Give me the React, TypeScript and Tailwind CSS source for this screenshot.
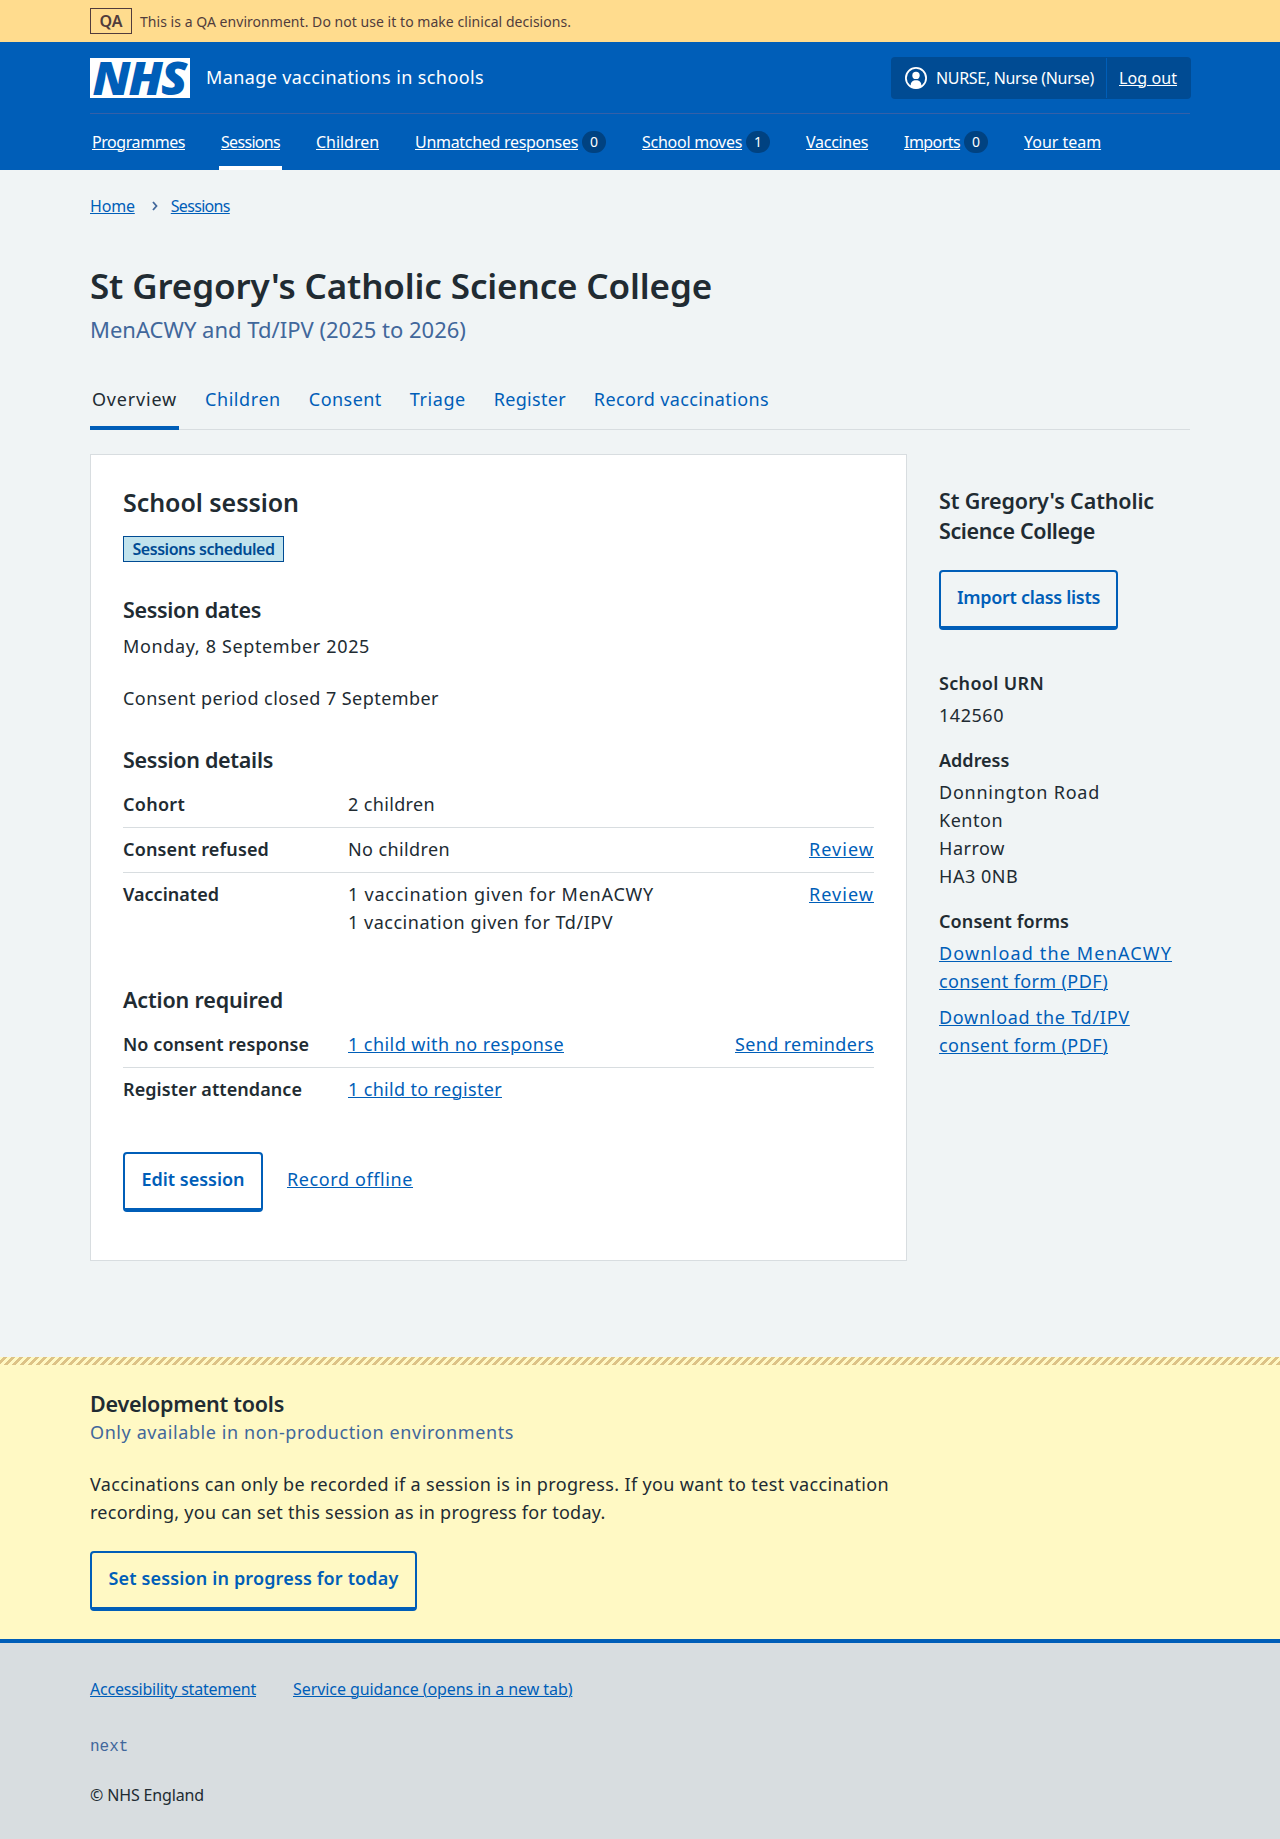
import type { ReactNode } from "react";

const link = "text-[#005eb8] underline decoration-1 underline-offset-[1px]";

type NavEntry = { label: string; tracking: string; count?: number; current?: boolean };

const NAV: NavEntry[] = [
  { label: "Programmes", tracking: "tracking-[-0.0273em]" },
  { label: "Sessions", tracking: "tracking-[-0.0429em]", current: true },
  { label: "Children", tracking: "tracking-[-0.0023em]" },
  { label: "Unmatched responses", tracking: "tracking-[-0.0185em]", count: 0 },
  { label: "School moves", tracking: "tracking-[-0.0163em]", count: 1 },
  { label: "Vaccines", tracking: "tracking-[-0.0181em]" },
  { label: "Imports", tracking: "tracking-[-0.0353em]", count: 0 },
  { label: "Your team", tracking: "tracking-[-0.0023em]" },
];

const TABS = [
  { label: "Overview", tracking: "tracking-[0.045em]", current: true },
  { label: "Children", tracking: "tracking-[0.032em]" },
  { label: "Consent", tracking: "tracking-[0.0255em]" },
  { label: "Triage", tracking: "tracking-[0.0324em]" },
  { label: "Register", tracking: "tracking-[0.0155em]" },
  { label: "Record vaccinations", tracking: "tracking-[0.0215em]" },
];

function NhsLogo() {
  return (
    <svg width="100" height="40" viewBox="0 0 100 40" role="img" aria-label="NHS" className="block overflow-visible">
      <rect width="100" height="40" fill="#fff" />
      <text
        x="2.5"
        y="36.700"
        textLength="93"
        lengthAdjust="spacingAndGlyphs"
        className="fill-[#005eb8] text-[46px] leading-none font-black italic tracking-[-0.04em]"
      >
        NHS
      </text>
    </svg>
  );
}

function UserIcon() {
  return (
    <svg width="22" height="22" viewBox="0 0 22 22" className="block shrink-0">
      <circle cx="11" cy="11" r="10.1" fill="none" stroke="#fff" strokeWidth="1.8" />
      <circle cx="11" cy="8.4" r="3.7" fill="#fff" />
      <path d="M5.7 20v-2c0-3 2.1-4.8 5.3-4.8s5.3 1.8 5.3 4.8v2Q14 21.600 11 21.600T5.700 20Z" fill="#fff" />
    </svg>
  );
}

function Container({ children, className = "" }: { children: ReactNode; className?: string }) {
  return <div className={`ml-[90px] w-[1100px] ${className}`}>{children}</div>;
}

function Button({ children, className }: { children: ReactNode; className: string }) {
  return (
    <button
      className={`flex h-[60px] items-start justify-center whitespace-nowrap rounded-[4px] border-2 border-b-4 border-[#005eb8] pt-[11px] text-[18px] leading-7 font-semibold text-[#005eb8] ${className}`}
    >
      {children}
    </button>
  );
}

function Row({ label, value, action, last }: { label: ReactNode; value: ReactNode; action?: ReactNode; last?: boolean }) {
  return (
    <div className={`flex pt-[7px] ${last ? "" : "border-b border-[#d8dde0] pb-[9px]"}`}>
      <dt className="w-[225px] shrink-0 font-semibold">{label}</dt>
      <dd className="flex-1">{value}</dd>
      {action && <dd>{action}</dd>}
    </div>
  );
}

function H3({ children, className = "" }: { children: ReactNode; className?: string }) {
  return <h3 className={`text-[21.5px] leading-[30px] font-semibold ${className}`}>{children}</h3>;
}

export default function App() {
  return (
    <div className="min-h-[1839px] bg-[#f0f4f5] font-['Noto_Sans',sans-serif] text-[18px] leading-7 whitespace-nowrap text-[#212b32]">
      <div className="h-[42px] bg-[#ffdc8e] text-[#513c3c]">
        <Container className="flex h-[42px] items-center gap-2">
          <strong className="flex h-[26px] w-[42px] items-center justify-center border border-[#513c3c] text-[16px] font-semibold">
            QA
          </strong>
          <span className="pt-px text-[14px] tracking-[0.0029em]">
            This is a QA environment. Do not use it to make clinical decisions.
          </span>
        </Container>
      </div>

      <header className="h-32 bg-[#005eb8] text-white">
        <Container>
          <div className="flex h-[72px] items-center justify-between border-b border-[#3560a8]">
            <div className="flex items-center gap-4">
              <NhsLogo />
              <span className="pb-[2px] tracking-[0.0217em]">Manage vaccinations in schools</span>
            </div>
            <div className="-mr-px flex h-[42px] rounded-[4px] bg-[#004b93] py-px text-[16px]">
              <div className="flex w-[216px] items-center gap-[9px] border-r border-[#005eb8] pl-[14px]">
                <UserIcon />
                <span className="tracking-[-0.02em]">NURSE, Nurse (Nurse)</span>
              </div>
              <div className="flex w-[84px] items-center pl-3">
                <a className="tracking-[0.0053em] underline decoration-1 underline-offset-[1px]">Log out</a>
              </div>
            </div>
          </div>
          <nav className="flex gap-8 text-[16px]">
            {NAV.map((n) => (
              <div
                key={n.label}
                className={`flex h-14 items-center gap-1 border-b-4 px-[2px] pt-1 ${n.current ? "border-white" : "border-transparent"}`}
              >
                <a className={`underline decoration-1 underline-offset-[1px] ${n.tracking}`}>{n.label}</a>
                {n.count !== undefined && (
                  <span className="flex h-[22px] w-6 items-center justify-center rounded-full bg-[#004281] text-[14px]">
                    {n.count}
                  </span>
                )}
              </div>
            ))}
          </nav>
        </Container>
      </header>

      <Container className="h-[1187px] pt-6">
        <nav className="flex items-center text-[16px] leading-6">
          <a className={`tracking-[-0.012em] ${link}`}>Home</a>
          <svg width="8" height="10" viewBox="0 0 8 10" className="mr-[12px] ml-[16px]" fill="none" stroke="#41679b" strokeWidth="1.8">
            <path d="M2 1l3.500 4L2 9" />
          </svg>
          <a className={`tracking-[-0.0429em] ${link}`}>Sessions</a>
        </nav>

        <h1 className="mt-[46px] text-[35px] leading-[44px] font-semibold tracking-[-0.0038em]">
          St Gregory&apos;s Catholic Science College
        </h1>
        <p className="mt-[5px] text-[22px] leading-8 text-[#41679b]">
          MenACWY and Td/IPV (2025 to 2026)
        </p>

        <nav className="mt-10 flex h-[45px] gap-6 border-b border-[#d8dde0]">
          {TABS.map((t) => (
            <a
              key={t.label}
              className={`h-[45px] px-[2px] ${t.tracking} ${t.current ? "border-b-4 border-[#005eb8]" : "text-[#005eb8]"}`}
            >
              {t.label}
            </a>
          ))}
        </nav>

        <div className="mt-6 flex gap-8">
          <section className="h-[807px] w-[817px] border border-[#d8dde0] bg-white px-8 pt-[31px]">
            <h2 className="text-[25px] leading-8 font-semibold tracking-[-0.0021em]">School session</h2>
            <strong className="mt-[18px] flex h-[26px] w-[161px] items-center justify-center border border-[#004b93] bg-[#c1e3ed] text-[16px] font-semibold tracking-[-0.0285em] text-[#004b93]">
              Sessions scheduled
            </strong>

            <H3 className="mt-[33px] tracking-[-0.015em]">Session dates</H3>
            <p className="mt-[7px] tracking-[0.0358em]">Monday, 8 September 2025</p>
            <p className="mt-6 tracking-[0.0247em]">Consent period closed 7 September</p>

            <H3 className="mt-[33px] tracking-[-0.0136em]">Session details</H3>
            <dl className="mt-2">
              <Row
                label={<span className="tracking-[0.0157em]">Cohort</span>}
                value={<span className="tracking-[0.0197em]">2 children</span>}
              />
              <Row
                label={<span className="tracking-[0.0083em]">Consent refused</span>}
                value={<span className="tracking-[0.0216em]">No children</span>}
                action={<a className={`tracking-[0.0582em] ${link}`}>Review</a>}
              />
              <Row
                last
                label={<span className="tracking-[0.001em]">Vaccinated</span>}
                value={
                  <>
                    <div className="tracking-[0.0426em]">1 vaccination given for MenACWY</div>
                    <div className="tracking-[0.0287em]">1 vaccination given for Td/IPV</div>
                  </>
                }
                action={<a className={`tracking-[0.0582em] ${link}`}>Review</a>}
              />
            </dl>

            <H3 className="mt-[49px] tracking-[-0.0072em]">Action required</H3>
            <dl className="mt-2">
              <Row
                label={<span className="tracking-[0.0039em]">No consent response</span>}
                value={<a className={`tracking-[0.0248em] ${link}`}>1 child with no response</a>}
                action={<a className={`tracking-[0.0198em] ${link}`}>Send reminders</a>}
              />
              <Row
                last
                label={<span className="tracking-[0.0039em]">Register attendance</span>}
                value={<a className={`tracking-[0.019em] ${link}`}>1 child to register</a>}
              />
            </dl>

            <div className="mt-[49px] flex gap-6">
              <Button className="w-[140px]">Edit session</Button>
              <a className={`mt-[13px] h-7 tracking-[0.0336em] ${link}`}>Record offline</a>
            </div>
          </section>

          <aside className="pt-8">
            <h2 className="text-[21.5px] leading-[30px] font-semibold">
              <span className="block tracking-[-0.0062em]">St Gregory&apos;s Catholic</span>
              <span className="block tracking-[-0.0177em]">Science College</span>
            </h2>
            <Button className="mt-6 w-[179px] tracking-[-0.0168em]">Import class lists</Button>
            <dl className="mt-[39px]">
              <dt className="font-semibold tracking-[0.0183em]">School URN</dt>
              <dd className="mt-1 tracking-[0.0299em]">142560</dd>
              <dt className="mt-[17px] font-semibold">Address</dt>
              <dd className="mt-1">
                <span className="block tracking-[0.0424em]">Donnington Road</span>
                <span className="block tracking-[0.03em]">Kenton</span>
                <span className="block tracking-[0.03em]">Harrow</span>
                <span className="block tracking-[0.03em]">HA3 0NB</span>
              </dd>
              <dt className="mt-[17px] font-semibold tracking-[0.0056em]">Consent forms</dt>
              <dd className="mt-1">
                <a className={link}>
                  <span className="tracking-[0.0644em]">Download the MenACWY</span>
                  <br />
                  <span className="tracking-[0.0207em]">consent form (PDF)</span>
                </a>
              </dd>
              <dd className="mt-2">
                <a className={link}>
                  <span className="tracking-[0.04em]">Download the Td/IPV</span>
                  <br />
                  <span className="tracking-[0.0207em]">consent form (PDF)</span>
                </a>
              </dd>
            </dl>
          </aside>
        </div>
      </Container>

      <section className="h-[282px] bg-[#fff9c4]">
        <div className="h-2 bg-[linear-gradient(135deg,transparent_22%,#ddc386_22%,#ddc386_47%,transparent_47%,transparent_72%,#ddc386_72%,#ddc386_97%,transparent_97%)] bg-size-[8px_8px]" />
        <Container className="pt-6">
          <H3 className="tracking-[-0.0115em]">Development tools</H3>
          <p className="-mt-px tracking-[0.0328em] text-[#41679b]">Only available in non-production environments</p>
          <p className="mt-6">
            <span className="block tracking-[0.0198em]">
              Vaccinations can only be recorded if a session is in progress. If you want to test vaccination
            </span>
            <span className="block tracking-[0.0155em]">
              recording, you can set this session as in progress for today.
            </span>
          </p>
          <Button className="mt-[25px] w-[327px] tracking-[0.0083em]">Set session in progress for today</Button>
        </Container>
      </section>

      <footer className="h-[200px] border-t-4 border-[#005eb8] bg-[#d8dde0] text-[16px] leading-6">
        <Container className="pt-[34px]">
          <div className="flex gap-[37px]">
            <a className={`tracking-[-0.0143em] ${link}`}>Accessibility statement</a>
            <a className={`tracking-[-0.0045em] ${link}`}>Service guidance (opens in a new tab)</a>
          </div>
          <p className="mt-[34px] font-['Liberation_Mono',monospace] text-[#41679b]">next</p>
          <p className="mt-6 tracking-[-0.0091em]">© NHS England</p>
        </Container>
      </footer>
    </div>
  );
}
